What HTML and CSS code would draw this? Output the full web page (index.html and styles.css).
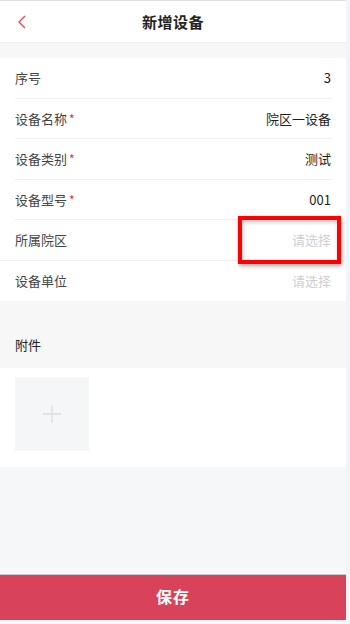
FILE: index.html
```html
<!DOCTYPE html>
<html lang="zh">
<head>
<meta charset="utf-8">
<link rel="stylesheet" href="styles.css">
</head>
<body>
<div class="page">
  <header class="nav">
    <svg class="back" width="10" height="14" viewBox="0 0 10 14"><path d="M8 1 L2 7 L8 13" fill="none" stroke="#e5475f" stroke-width="1.4"/></svg>
    <h1 class="title">新增设备</h1>
  </header>
  <section class="form">
    <div class="row"><span class="label">序号</span><span class="value">3</span></div>
    <div class="row"><span class="label">设备名称<i class="req">*</i></span><span class="value">院区一设备</span></div>
    <div class="row"><span class="label">设备类别<i class="req">*</i></span><span class="value">测试</span></div>
    <div class="row"><span class="label">设备型号<i class="req">*</i></span><span class="value">001</span></div>
    <div class="row row-full"><span class="label">所属院区</span><span class="value ph">请选择</span><div class="highlight"></div></div>
    <div class="row last"><span class="label">设备单位</span><span class="value ph">请选择</span></div>
  </section>
  <div class="section-title">附件</div>
  <section class="attach">
    <div class="upload">
      <svg width="20" height="20" viewBox="0 0 20 20"><path d="M10 1 V19 M1 10 H19" stroke="#dcdde2" stroke-width="1.3"/></svg>
    </div>
  </section>
  <div class="spacer"></div>
  <footer class="footer"><button class="save">保存</button></footer>
</div>
</body>
</html>
```
FILE: styles.css
```css
* { box-sizing: border-box; margin: 0; padding: 0; }
html, body { height: 100%; }
body {
  background: #f3f4f8;
  font-family: "Noto Sans CJK SC", "Noto Sans", sans-serif;
  width: 350px;
  height: 624px;
  overflow: hidden;
}
.page {
  width: 346px;
  height: 624px;
  background: #f7f7f8;
  display: flex;
  flex-direction: column;
}
.nav {
  height: 43px;
  background: #fff;
  border-top: 1px solid #dfdfe5;
  border-bottom: 1px solid #f0f0f0;
  position: relative;
  display: flex;
  align-items: center;
  justify-content: center;
  flex: none;
}
.back { position: absolute; left: 17px; top: 14px; }
.title { font-size: 15px; font-weight: 700; color: #222; letter-spacing: 0.5px; }
.form {
  margin-top: 15px;
  background: #fff;
  flex: none;
}
.row {
  height: 40.5px;
  margin: 0 15px;
  border-bottom: 1px solid #f0f0f2;
  display: flex;
  align-items: center;
  justify-content: space-between;
  position: relative;
  font-size: 13px;
}
.row-full { margin: 0; padding: 0 15px; }
.row.last { border-bottom: none; }
.label { color: #444; }
.req { color: #e5283f; font-style: normal; margin-left: 2px; font-size: 12px; }
.value { color: #1e1e1e; }
.value.ph { color: #cfcfd2; }
.highlight {
  position: absolute;
  left: 238px;
  top: -4px;
  width: 103px;
  height: 48px;
  border: 4px solid #ff0000;
  box-shadow: 1px 2px 4px rgba(0,0,0,0.35), inset 1px 2px 4px rgba(0,0,0,0.25);
}
.section-title {
  height: 67px;
  padding: 34px 15px 0;
  font-size: 13px;
  color: #222;
  flex: none;
}
.attach {
  background: #fff;
  padding: 9px 15px 16px;
  flex: none;
}
.upload {
  width: 74px;
  height: 74px;
  background: #f5f6f8;
  display: flex;
  align-items: center;
  justify-content: center;
}
.spacer { flex: 1; background: #f6f7f9; }
.footer {
  flex: none;
  height: 50px;
  background: #f6f7f9;
  border-top: 1px solid #c8c9cc;
}
.save {
  display: block;
  width: 100%;
  height: 45px;
  border: none;
  background: #d9435a;
  color: #fff;
  font-family: inherit;
  font-size: 16px;
  font-weight: 700;
  letter-spacing: 1px;
  padding-bottom: 3px;
}
```
